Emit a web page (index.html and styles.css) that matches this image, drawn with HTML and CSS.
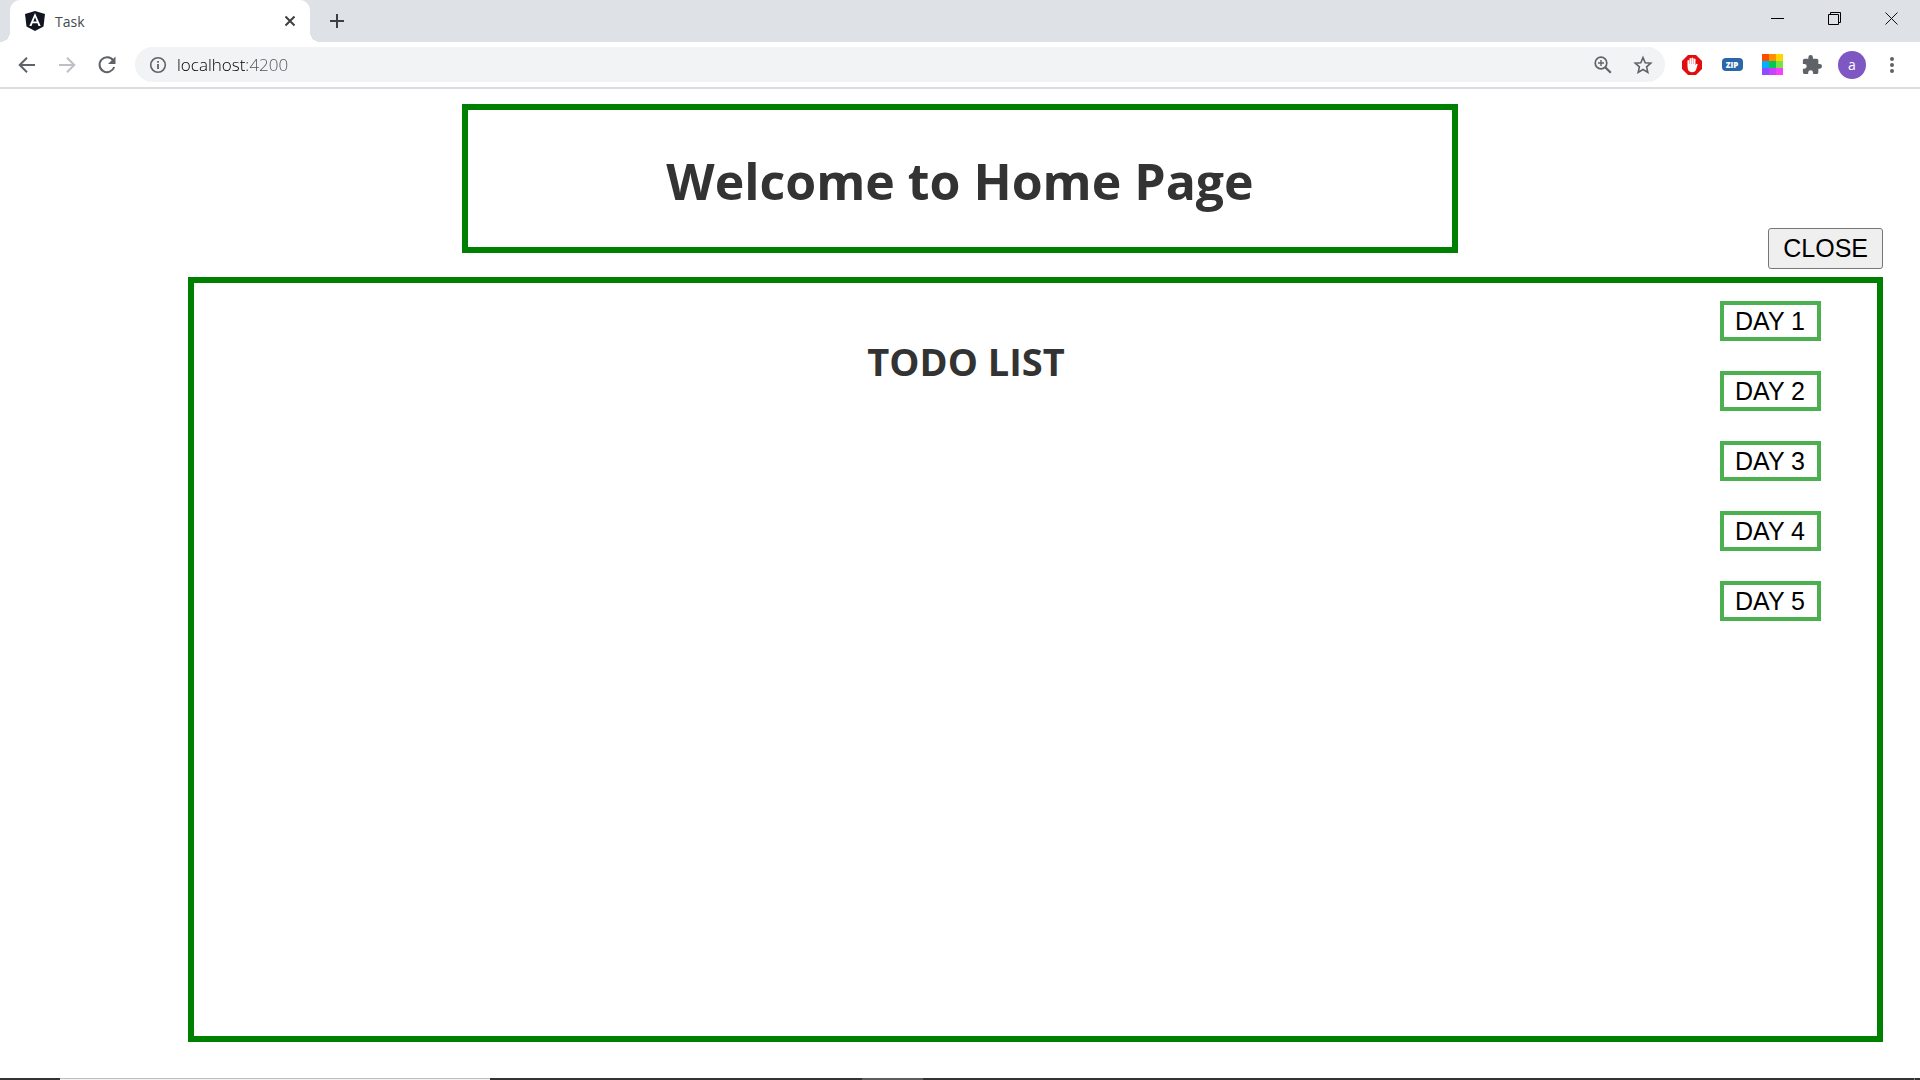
FILE: index.html
```html
<!DOCTYPE html>
<html lang="en">
<head>
  <meta charset="utf-8">
  <meta name="viewport" content="width=device-width, initial-scale=1">
  <title>Task</title>
  <link rel="stylesheet" href="styles.css">
</head>
<body>
  <header class="browser">
    <div class="tab-strip">
      <div class="tab">
        <svg class="tab-icon" width="20" height="20" viewBox="0 0 20 20" aria-hidden="true"><path fill="#11151f" d="M10 0 20 3 18.500 15.500 10 20 1.500 15.500 0 3z"/><path fill="#fff" fill-rule="evenodd" d="M10 2 15.700 15H13.500L12.400 12.200H7.600L6.500 15H4.300zM10 6.200 8.300 10.400h3.400z"/></svg>
        <span class="tab-title">Task</span>
        <button class="icon-button" type="button" aria-label="Close tab"><svg width="12" height="12" viewBox="0 0 12 12"><path d="m1.500 1.500 9 9m0-9-9 9" stroke="#3c4043" stroke-width="2"/></svg></button>
      </div>
      <button class="icon-button new-tab" type="button" aria-label="New tab"><svg width="16" height="16" viewBox="0 0 16 16"><path d="M8 1v14M1 8h14" stroke="#3c4043" stroke-width="2"/></svg></button>
      <div class="window-controls">
        <button class="icon-button" type="button" aria-label="Minimize"><svg width="14" height="14" viewBox="0 0 14 14"><path d="M0 6.500h13" stroke="#000"/></svg></button>
        <button class="icon-button" type="button" aria-label="Restore"><svg width="14" height="14" viewBox="0 0 14 14"><path d="M.5 2.500h10v10H.5zM2.500 2.500v-2h10v10h-2" fill="none" stroke="#000"/></svg></button>
        <button class="icon-button" type="button" aria-label="Close window"><svg width="14" height="14" viewBox="0 0 14 14"><path d="m.5.5 12 12m0-12-12 12" stroke="#111"/></svg></button>
      </div>
    </div>
    <div class="toolbar">
      <button class="icon-button" type="button" aria-label="Back"><svg width="20" height="20" viewBox="0 0 20 20"><path d="M18 10H3m7-7.300L2.700 10l7.300 7.300" fill="none" stroke="#5f6368" stroke-width="2"/></svg></button>
      <button class="icon-button" type="button" aria-label="Forward" disabled><svg width="20" height="20" viewBox="0 0 20 20"><path d="M2 10h15m-7-7.300 7.300 7.300-7.300 7.300" fill="none" stroke="#bdc1c6" stroke-width="2"/></svg></button>
      <button class="icon-button" type="button" aria-label="Reload"><svg width="20" height="20" viewBox="0 0 20 20"><path d="M16.200 5.300A7.500 7.500 0 1 0 17.200 12" fill="none" stroke="#5f6368" stroke-width="2"/><path d="M18.500 1.500V9H11z" fill="#5f6368"/></svg></button>
      <form class="omnibox">
        <svg width="18" height="18" viewBox="0 0 18 18" aria-hidden="true"><circle cx="9" cy="9" r="7.300" fill="none" stroke="#5f6368" stroke-width="1.600"/><path d="M9 8v5M9 5v1.800" stroke="#5f6368" stroke-width="1.800"/></svg>
        <input class="address" type="text" value="localhost:4200" aria-label="Address">
        <button class="icon-button" type="button" aria-label="Zoom"><svg width="20" height="20" viewBox="0 0 20 20"><circle cx="8" cy="8" r="5.800" fill="none" stroke="#5f6368" stroke-width="1.700"/><path d="m12.200 12.200 5.600 5.600" stroke="#5f6368" stroke-width="2.200"/><path d="M8 5v6M5 8h6" stroke="#5f6368" stroke-width="1.400"/></svg></button>
        <button class="icon-button" type="button" aria-label="Bookmark"><svg width="20" height="20" viewBox="0 0 20 20"><path d="m10 2.600 2.200 5.100 5.600.5-4.200 3.700 1.200 5.500L10 14.500l-4.800 2.900 1.200-5.500-4.200-3.700 5.600-.5z" fill="none" stroke="#5f6368" stroke-width="1.600"/></svg></button>
      </form>
      <div class="extensions">
        <button class="icon-button" type="button" aria-label="Ad blocker"><svg width="22" height="22" viewBox="0 0 22 22"><path fill="#e40d0d" d="M7 1h8l6 6v8l-6 6H7l-6-6V7z"/><path fill="#fff" d="M6.500 12V6.500q.8-1 1.700 0V10h.3V4.500q.9-1 1.800 0V10h.3V4q.9-1 1.800 0v6h.3V5q.9-1 1.800 0v6.500l.6-1.400q1-1 1.600.2L15.300 15q-1 3.200-4.400 3.200-4.400 0-4.400-6.200z"/></svg></button>
        <button class="icon-button" type="button" aria-label="Zip extension"><span class="zip">ZIP</span></button>
        <button class="icon-button" type="button" aria-label="Colors"><svg width="21" height="21" viewBox="0 0 21 21" shape-rendering="crispEdges"><path fill="#ff4b00" d="M0 0h7v7H0z"/><path fill="#ff9100" d="M7 0h7v7H7z"/><path fill="#ffd600" d="M14 0h7v7h-7z"/><path fill="#00b0ff" d="M0 7h7v7H0z"/><path fill="#00c853" d="M7 7h7v7H7z"/><path fill="#76e34b" d="M14 7h7v7h-7z"/><path fill="#8b4dff" d="M0 14h7v7H0z"/><path fill="#cb3fff" d="M7 14h7v7H7z"/><path fill="#f540ff" d="M14 14h7v7h-7z"/></svg></button>
        <button class="icon-button" type="button" aria-label="Extensions"><svg width="20" height="20" viewBox="1 1 22 22"><path fill="#5f6368" d="M20.500 11H19V7c0-1.100-.9-2-2-2h-4V3.500a2.500 2.500 0 0 0-5 0V5H4c-1.100 0-2 .9-2 2v3.800h1.500a2.700 2.700 0 0 1 0 5.400H2V20c0 1.100.9 2 2 2h3.800v-1.500a2.700 2.700 0 0 1 5.400 0V22H17c1.100 0 2-.9 2-2v-4h1.500a2.500 2.500 0 0 0 0-5z"/></svg></button>
        <button class="icon-button" type="button" aria-label="Profile"><span class="avatar">a</span></button>
        <button class="icon-button" type="button" aria-label="Menu"><svg width="20" height="20" viewBox="0 0 20 20" fill="#5f6368"><circle cx="10" cy="4" r="2"/><circle cx="10" cy="10" r="2"/><circle cx="10" cy="16" r="2"/></svg></button>
      </div>
    </div>
  </header>
  <main class="page">
    <div class="page-head">
      <h1 class="banner">Welcome to Home Page</h1>
      <button class="close" type="button">CLOSE</button>
    </div>
    <section class="panel">
      <h2 class="panel-title">TODO LIST</h2>
      <nav class="days" aria-label="Days">
        <button class="day" type="button">DAY 1</button>
        <button class="day" type="button">DAY 2</button>
        <button class="day" type="button">DAY 3</button>
        <button class="day" type="button">DAY 4</button>
        <button class="day" type="button">DAY 5</button>
      </nav>
    </section>
  </main>
  <footer class="taskbar">
    <div class="task-search"></div>
    <div class="task-active"></div>
    <div class="show-desktop"></div>
  </footer>
</body>
</html>
```

FILE: styles.css
```css
* {
  box-sizing: border-box;
}

body {
  display: flex;
  flex-direction: column;
  min-height: 100vh;
  margin: 0;
  background: #fff;
  color: #333;
  font-family: "Segoe UI", "Open Sans", "Noto Sans", sans-serif;
}

.icon-button {
  display: flex;
  align-items: center;
  justify-content: center;
  flex: none;
  padding: 0;
  border: 0;
  background: none;
  font: inherit;
}

/* Browser window */
.browser {
  border-bottom: 2px solid #dadce0;
}

.tab-strip {
  display: flex;
  height: 42px;
  padding-left: 10px;
  background: #dee1e6;
}

.tab {
  position: relative;
  display: flex;
  align-items: center;
  gap: 10px;
  width: 300px;
  padding: 0 14px 0 15px;
  border-radius: 10px 10px 0 0;
  background: #fff;
}

/* Curved feet on either side of the tab */
.tab::before,
.tab::after {
  content: "";
  position: absolute;
  bottom: 0;
  width: 10px;
  height: 10px;
}

.tab::before {
  right: 100%;
  background: radial-gradient(circle at 0 0, #dee1e6 10px, #fff 10px);
}

.tab::after {
  left: 100%;
  background: radial-gradient(circle at 100% 0, #dee1e6 10px, #fff 10px);
}

.tab-title {
  flex: 1;
  color: #45494d;
  font-size: 14px;
}

.new-tab {
  width: 34px;
  margin-left: 10px;
}

.window-controls {
  display: flex;
  height: 37px;
  margin-left: auto;
}

.window-controls .icon-button {
  width: 57px;
}

.toolbar {
  display: flex;
  align-items: center;
  height: 45px;
  padding-left: 7px;
}

.toolbar .icon-button {
  width: 40px;
  height: 34px;
}

.omnibox {
  display: flex;
  flex: 1;
  align-items: center;
  height: 35px;
  margin-left: 8px;
  padding: 0 2px 0 14px;
  border-radius: 18px;
  background: #f1f3f4;
}

/* Host name in dark text, port in grey */
.address {
  flex: 1;
  min-width: 0;
  margin-left: 10px;
  padding: 0;
  border: 0;
  outline: 0;
  background: linear-gradient(to right, #000 70px, #4c5054 70px);
  -webkit-background-clip: text;
  background-clip: text;
  color: transparent;
  font-family: inherit;
  font-size: 17px;
  font-weight: 300;
}

.extensions {
  display: flex;
  margin-left: 7px;
  padding-right: 8px;
}

.zip {
  width: 21px;
  border-radius: 4px;
  background: #2a67a8;
  color: #fff;
  font-size: 8px;
  font-weight: 800;
  line-height: 13px;
}

.avatar {
  width: 28px;
  border-radius: 50%;
  background: #7e57c2;
  color: #fff;
  font-size: 14px;
  line-height: 28px;
}

/* Page */
.page {
  display: flex;
  flex: 1;
  flex-direction: column;
  gap: 8px;
  padding: 15px 37px 36px 37px;
}

.page-head {
  display: grid;
  grid-template-columns: 1fr 54% 1fr;
}

.banner {
  grid-column: 2;
  margin: 0 0 16px;
  padding: 36px 24px 31px;
  border: 6px solid green;
  font-size: 50px;
  line-height: 70px;
  text-align: center;
}

.close,
.day {
  color: #000;
  font-family: Arial, "Liberation Sans", sans-serif;
  font-size: 25px;
  line-height: 28px;
}

.close {
  grid-column: 3;
  align-self: end;
  justify-self: end;
  padding: 5px 14px 6px;
  border: 1px solid #767676;
  border-radius: 3px;
  background: #efefef;
}

.panel {
  display: grid;
  flex: 1;
  grid-template-columns: 1fr auto;
  align-items: start;
  margin-left: 151px;
  padding: 18px 56px 18px 18px;
  border: 6px solid green;
}

.panel-title {
  margin: 34px 0 0;
  font-size: 38px;
  line-height: 52px;
  text-align: center;
}

.days {
  display: grid;
  gap: 30px;
}

.day {
  padding: 2px 12px 2px 11px;
  border: 4px solid #4caf50;
  background: #fff;
}

/* Top edge of the desktop taskbar */
.taskbar {
  display: flex;
  height: 2px;
  padding: 0 5px 0 60px;
  background: #333;
}

.task-search {
  width: 430px;
  border-top: 1px solid #bfbfbf;
  background: #f2f2f2;
}

.task-active {
  width: 61px;
  margin-left: 372px;
  background: #5c5c5c;
}

.show-desktop {
  width: 1px;
  margin-left: auto;
  background: #808080;
}
```
